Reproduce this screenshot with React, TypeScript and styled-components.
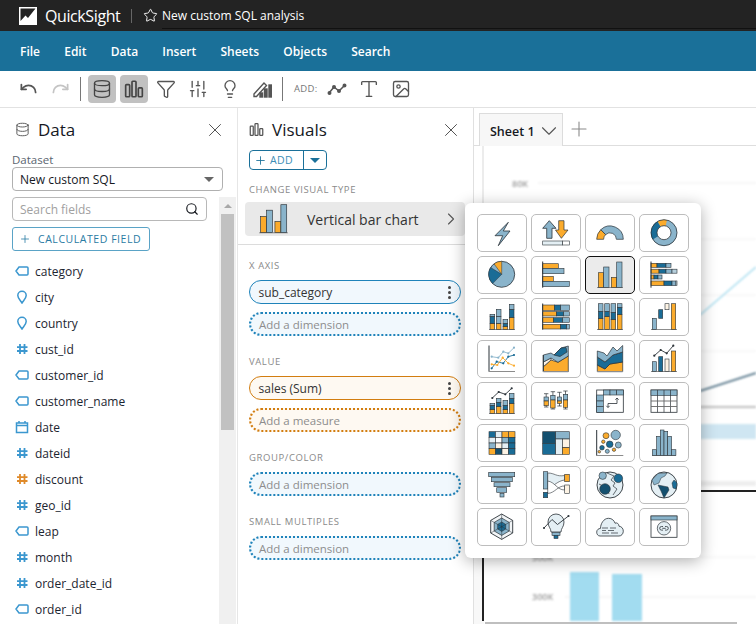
import styled, { createGlobalStyle } from "styled-components";
import { ReactNode } from "react";
import {
  ChevronDown,
  ChevronRight,
  Database,
  Filter,
  Image,
  Lightbulb,
  Plus,
  Redo,
  Search,
  SlidersVertical,
  Star,
  Type,
  Undo,
  X,
} from "lucide-react";

const GlobalStyle = createGlobalStyle`
  html, body { margin: 0; padding: 0; background: #fff; }
  * { box-sizing: border-box; }
`;

const Page = styled.div`
  width: 756px;
  height: 624px;
  overflow: hidden;
  display: flex;
  flex-direction: column;
  font-family: "Open Sans", "Noto Sans", sans-serif;
  color: #16191f;
`;

const TopBar = styled.header`
  height: 31px;
  background: #232323;
  display: flex;
  align-items: center;
  padding-left: 19px;
  color: #fff;
`;

const Brand = styled.span`
  font-size: 16px;
  letter-spacing: -0.4px;
  margin-left: 8px;
  width: 86px;
`;

const TopDivider = styled.span`
  width: 1px;
  height: 14px;
  background: #666;
`;

const Title = styled.span`
  font-size: 12px;
  font-weight: 500;
  margin-left: 4px;
  height: 25px;
  line-height: 24px;
  margin-top: 1px;
  flex: 1;
  border-bottom: 1px solid #111;
`;

const MenuBar = styled.nav`
  height: 40px;
  background: #1a7099;
  display: flex;
  align-items: center;
  gap: 24.2px;
  padding-left: 20px;
`;

const MenuItem = styled.span`
  font-size: 12px;
  font-weight: 600;
  color: #fff;
`;

const Toolbar = styled.div`
  height: 37px;
  border-bottom: 1px solid #e2e2e2;
  display: flex;
  align-items: center;
  padding: 0 0 1px 14px;
  color: #555;
`;

const ToolButton = styled.span<{ $active?: boolean; $muted?: boolean }>`
  width: 28px;
  height: 28px;
  margin-right: 4px;
  border-radius: 4px;
  display: flex;
  align-items: center;
  justify-content: center;
  background: ${(p) => (p.$active ? "#c1c1c1" : "transparent")};
  color: ${(p) => (p.$muted ? "#c4c4c4" : p.$active ? "#444" : "#555")};
`;

const ToolDivider = styled.span`
  width: 1px;
  height: 24px;
  background: #777;
  margin: 0 7px 0 2px;
`;

const AddLabel = styled.span`
  font-size: 9.5px;
  color: #777;
  margin: 0 2px 0 4px;
  letter-spacing: 0.3px;
  width: 27px;
`;

const Workspace = styled.main`
  position: relative;
  flex: 1;
  min-height: 0;
  display: flex;
`;

const DataPanel = styled.section`
  width: 237px;
  display: flex;
  flex-direction: column;
  overflow: hidden;
`;

const VisualsPanel = styled.section`
  width: 237px;
  border-left: 1px solid #e6e6e6;
  border-right: 1px solid #e0e0e0;
  display: flex;
  flex-direction: column;
  padding-left: 11px;
  overflow: hidden;
`;

const PanelHead = styled.div<{ $right: number }>`
  height: 43px;
  flex: none;
  display: flex;
  align-items: center;
  gap: 8px;
  padding: 0 ${(p) => p.$right}px 0 0;
  font-size: 17px;
  color: #16191f;
  svg:first-child {
    color: #555;
  }
`;

const PanelTitle = styled.span`
  flex: 1;
`;

const DataInner = styled.div`
  padding-left: 12px;
  padding-right: 14px;
`;

const DatasetLabel = styled.div`
  font-size: 11.5px;
  color: #5a6570;
  height: 15px;
  margin-top: 1px;
  line-height: 15px;
`;

const SelectBox = styled.div`
  height: 24px;
  border: 1px solid #b0b0b0;
  border-radius: 4px;
  display: flex;
  align-items: center;
  justify-content: space-between;
  padding: 0 8px 0 7px;
  font-size: 12px;
`;

const Caret = styled.span<{ $color: string }>`
  width: 0;
  height: 0;
  border-left: 5px solid transparent;
  border-right: 5px solid transparent;
  border-top: 5px solid ${(p) => p.$color};
`;

const FieldArea = styled.div`
  flex: 1;
  min-height: 0;
  display: flex;
  margin-top: 6px;
`;

const FieldColumn = styled.div`
  width: 219px;
  padding-left: 12px;
  padding-right: 12px;
`;

const SearchBox = styled.div`
  height: 24px;
  border: 1px solid #b8b8b8;
  border-radius: 4px;
  display: flex;
  align-items: center;
  justify-content: space-between;
  padding: 0 7px;
  font-size: 12px;
  color: #a0a0a0;
  svg {
    color: #16191f;
  }
`;

const CalcButton = styled.div`
  width: 138px;
  height: 24px;
  margin-top: 6px;
  margin-bottom: 7px;
  border: 1px solid #5aa3c6;
  border-radius: 3px;
  display: flex;
  align-items: center;
  gap: 7px;
  padding-left: 6px;
  font-size: 10.5px;
  letter-spacing: 0.55px;
  color: #2a7ba3;
  white-space: nowrap;
`;

const FieldRow = styled.div`
  height: 26px;
  display: flex;
  align-items: center;
  gap: 6px;
  padding-left: 3px;
  font-size: 12px;
  color: #1c2530;
  white-space: nowrap;
`;

const ScrollTrack = styled.div`
  width: 17px;
  background: #f0f0f0;
  position: relative;
  display: flex;
  flex-direction: column;
  align-items: center;
  padding-top: 7px;
`;

const ScrollArrow = styled.span`
  width: 0;
  height: 0;
  border-left: 4px solid transparent;
  border-right: 4px solid transparent;
  border-bottom: 4px solid #a8a8a8;
`;

const ScrollThumb = styled.div`
  width: 13px;
  height: 216px;
  margin-top: 6px;
  background: #c1c1c1;
`;

const AddGroup = styled.div`
  width: 78px;
  height: 20px;
  flex: none;
  margin-top: -1px;
  border: 1px solid #1a7099;
  border-radius: 4px;
  display: flex;
  align-items: stretch;
`;

const AddMain = styled.span`
  width: 54px;
  display: flex;
  align-items: center;
  gap: 3px;
  padding-left: 4px;
  font-size: 10.5px;
  letter-spacing: 0.4px;
  color: #3c8db5;
  border-right: 1px solid #1a7099;
  svg {
    color: #1a7099;
  }
`;

const AddCaret = styled.span`
  flex: 1;
  display: flex;
  align-items: center;
  justify-content: center;
`;

const SectionLabel = styled.div<{ $top: number }>`
  font-size: 9.5px;
  letter-spacing: 0.6px;
  color: #8a8a8a;
  height: 14px;
  line-height: 14px;
  margin-top: ${(p) => p.$top}px;
  margin-bottom: 7px;
  white-space: nowrap;
`;

const TypeRow = styled.div`
  width: 220px;
  height: 34px;
  flex: none;
  margin-left: -4px;
  margin-top: -2px;
  background: #e9e9e9;
  border-radius: 4px;
  display: flex;
  align-items: center;
  font-size: 14px;
  color: #333;
  svg:first-child {
    margin-left: 1px;
    margin-right: 6px;
  }
`;

const TypeName = styled.span`
  flex: 1;
`;

const TypeRule = styled.div`
  height: 1px;
  flex: none;
  background: #dcdcdc;
  margin: 8px 0 0 -11px;
`;

const Well = styled.div<{ $kind: "dim" | "measure"; $empty?: boolean }>`
  width: 212px;
  height: 24px;
  flex: none;
  margin-bottom: 8px;
  border-radius: 12px;
  display: flex;
  align-items: center;
  justify-content: space-between;
  padding: 0 9px 0 ${(p) => (p.$empty ? 8 : 8.5)}px;
  font-size: ${(p) => (p.$empty ? 11.5 : 12)}px;
  border: ${(p) => {
    const color = p.$kind === "dim" ? "#1f83ba" : "#d27d10";
    return p.$empty ? `2px dotted ${color}` : `1px solid ${color}`;
  }};
  background: ${(p) => (p.$kind === "dim" ? "#f1f8fd" : "#fef9f2")};
  color: ${(p) => (p.$empty ? "#8d8d8d" : "#333")};
`;

const Dots = styled.span`
  display: flex;
  flex-direction: column;
  gap: 2px;
  i {
    width: 3px;
    height: 3px;
    border-radius: 50%;
    background: #444;
  }
`;

const Canvas = styled.section`
  flex: 1;
  min-width: 0;
  display: flex;
  flex-direction: column;
`;

const TabStrip = styled.div`
  height: 38px;
  flex: none;
  border-bottom: 1px solid #dedede;
  display: flex;
  align-items: flex-end;
  padding-left: 5px;
  color: #8a8a8a;
`;

const Tab = styled.div`
  width: 84px;
  height: 33px;
  margin-bottom: -1px;
  border: 1px solid #dcdcdc;
  border-bottom: 0;
  background: #f7f7f7;
  display: flex;
  align-items: center;
  justify-content: space-between;
  padding: 2px 0 0 10px;
  font-size: 12.5px;
  font-weight: 600;
  color: #16191f;
`;

const NewTab = styled.span`
  margin: 0 0 4px 4px;
  display: flex;
`;

const ChartArt = styled.svg`
  display: block;
  width: 282px;
  flex: 1;
  min-height: 0;
`;

const Popover = styled.div`
  position: absolute;
  left: 465px;
  top: 95px;
  width: 236px;
  height: 355px;
  padding: 11px 12px;
  background: #fff;
  border-radius: 6px;
  box-shadow: 0 3px 16px rgba(0, 0, 0, 0.32);
  display: grid;
  grid-template-columns: repeat(4, 50px);
  grid-auto-rows: 38px;
  gap: 4px;
`;

const Tile = styled.div<{ $selected?: boolean }>`
  border-radius: 5px;
  border: ${(p) => (p.$selected ? "1px solid #111" : "1px solid #bdbdbd")};
  background: ${(p) => (p.$selected ? "#ebebeb" : "#fff")};
  overflow: hidden;
  svg {
    display: block;
    width: 50px;
    height: 38px;
    margin: -1px;
  }
`;

const O = "#fbab2c";
const L = "#8ab4cb";
const D = "#1a6c96";
const N = "#14506f";
const P = "#e4eff4";
const C = "#fdf3e4";
const K = "#2b3238";
const G = "#8c8c8c";

function R({ x, y, w, h, f }: { x: number; y: number; w: number; h: number; f: string }) {
  return <rect x={x} y={y} width={w} height={h} fill={f} stroke={K} strokeWidth={0.6} />;
}

// a column built upward from the base line
function Col({ x, w, base, parts }: { x: number; w: number; base: number; parts: [number, string][] }) {
  let top = base;
  return (
    <>
      {parts.map(([h, f], i) => {
        top -= h;
        return <R key={i} x={x} y={top} w={w} h={h} f={f} />;
      })}
    </>
  );
}

// a row built rightward from the axis
function Row({ x, y, h, parts }: { x: number; y: number; h: number; parts: [number, string][] }) {
  let left = x;
  return (
    <>
      {parts.map(([w, f], i) => {
        const at = left;
        left += w;
        return <R key={i} x={at} y={y} w={w} h={h} f={f} />;
      })}
    </>
  );
}

const Base = ({ x1 = 12, x2 = 38, y = 31.5 }: { x1?: number; x2?: number; y?: number }) => (
  <line x1={x1} x2={x2} y1={y} y2={y} stroke={G} strokeWidth={1} />
);

const VAxis = ({ x = 12, y1 = 5.5, y2 = 31.7 }: { x?: number; y1?: number; y2?: number }) => (
  <line x1={x} x2={x} y1={y1} y2={y2} stroke={K} strokeWidth={1} />
);

function Trend({ pts, color = K }: { pts: string; color?: string }) {
  return (
    <>
      <polyline points={pts} fill="none" stroke={color} strokeWidth={0.9} />
      {pts.split(" ").map((p) => {
        const [cx, cy] = p.split(",");
        return <circle key={p} cx={cx} cy={cy} r={1.1} fill={color} />;
      })}
    </>
  );
}

const barChart = (
  <>
    <Base x1={12} x2={38} />
    <R x={13.3} y={16.7} w={5.4} h={14.6} f={O} />
    <R x={18.7} y={11} w={5.3} h={20.3} f={L} />
    <R x={26.3} y={21.3} w={5.4} h={10} f={O} />
    <R x={31.7} y={6} w={5.3} h={25.3} f={L} />
  </>
);

const tiles: ReactNode[] = [
  <polygon points="31.3,8.3 18,21.7 25.7,21.7 21.3,31.7 33,17 26.3,17" fill={L} stroke={K} strokeWidth={0.8} />,
  <>
    <polygon points="18.3,6.7 11.7,14.3 15.7,14.3 15.7,24.3 21,24.3 21,14.3 25,14.3" fill={L} stroke={K} strokeWidth={0.8} />
    <polygon points="27.7,6.7 33,6.7 33,16 37,16 30.4,24.3 24.5,16 27.7,16" fill={O} stroke={K} strokeWidth={0.7} />
    <R x={11.7} y={27} w={20} h={4} f={P} />
    <R x={31.7} y={27} w={6.6} h={4} f="#fff" />
  </>,
  <>
    <path d="M11.7 25.3A13.3 13.3 0 0 1 15.8 15.7L20.6 20.6A6.4 6.4 0 0 0 18.6 25.3Z" fill={O} stroke={K} strokeWidth={0.7} />
    <path d="M15.8 15.7A13.3 13.3 0 0 1 38.3 25.3H31.4A6.4 6.4 0 0 0 20.6 20.6Z" fill={L} stroke={K} strokeWidth={0.7} />
  </>,
  <>
    <circle cx={25} cy={18.7} r={10} fill="none" stroke={L} strokeWidth={6} />
    <path d="M18.5 7.4A13 13 0 0 1 28 6L26.6 11.9A7 7 0 0 0 21.5 12.6Z" fill={O} />
    <path d="M18.5 7.4L21.5 12.7A7 7 0 0 0 19 22.3L13.8 25.4A13 13 0 0 1 18.5 7.4Z" fill={D} />
    <circle cx={25} cy={18.7} r={13} fill="none" stroke={K} strokeWidth={0.8} />
    <circle cx={25} cy={18.7} r={7} fill="#fff" stroke={K} strokeWidth={0.8} />
  </>,
  <>
    <circle cx={24.7} cy={18.3} r={13} fill={L} stroke={K} strokeWidth={0.8} />
    <path d="M24.7 18.3L13.6 11.5A13 13 0 0 0 15.6 27.6Z" fill={D} stroke={K} strokeWidth={0.5} />
    <path d="M24.7 18.3L24.7 5.3A13 13 0 0 0 17 7.8Z" fill={O} stroke={K} strokeWidth={0.5} />
  </>,
  <>
    <R x={11.7} y={7.7} w={15.6} h={4.7} f={O} />
    <R x={11.7} y={12.4} w={21.3} h={5.3} f={L} />
    <R x={11.7} y={20.3} w={10.6} h={5} f={O} />
    <R x={11.7} y={25.3} w={26.6} h={5.4} f={L} />
    <VAxis x={11.7} />
  </>,
  barChart,
  <>
    <Row x={12} y={7.3} h={4} parts={[[6, O], [9, D], [5, L]]} />
    <Row x={12} y={13.2} h={4} parts={[[8, O], [7, D], [6, L], [5, "#b6cfdc"]]} />
    <Row x={12} y={19} h={4} parts={[[3, O], [4, D], [4, L]]} />
    <Row x={12} y={25} h={4.6} parts={[[13, O], [8, D], [4, L], [1, P]]} />
    <VAxis x={12} />
  </>,
  <>
    <Base />
    <Col x={13} w={4.7} base={31.3} parts={[[6, O], [7, D], [2, L]]} />
    <Col x={19.3} w={4.7} base={31.3} parts={[[6, O], [7, L], [7, L]]} />
    <Col x={26} w={4.7} base={31.3} parts={[[3, O], [3, D], [4, L]]} />
    <Col x={32.3} w={4.7} base={31.3} parts={[[12, O], [8, D], [5, L]]} />
  </>,
  <>
    <Row x={11.7} y={7} h={5.3} parts={[[12, O], [6, D], [8.6, L]]} />
    <Row x={11.7} y={13.7} h={4.3} parts={[[14, O], [7, D], [5.6, L]]} />
    <Row x={11.7} y={19.7} h={4.6} parts={[[11, O], [9, D], [6.6, L]]} />
    <Row x={11.7} y={26.3} h={4.7} parts={[[18, O], [6, D], [2.6, L]]} />
    <VAxis x={11.7} />
  </>,
  <>
    <Base />
    <Col x={13.3} w={4.7} base={31.3} parts={[[11, O], [7, D], [7.6, L]]} />
    <Col x={19.7} w={4.7} base={31.3} parts={[[13, O], [5, D], [7.6, L]]} />
    <Col x={26} w={4.7} base={31.3} parts={[[10, O], [7, D], [8.6, L]]} />
    <Col x={32.3} w={4.7} base={31.3} parts={[[15, O], [7, D], [3.6, L]]} />
  </>,
  <>
    <Base />
    <R x={13.3} y={20.3} w={4} h={11} f={L} />
    <R x={19.7} y={11.7} w={4} h={8.6} f={D} />
    <R x={26} y={5.7} w={4} h={6} f={C} />
    <R x={32.3} y={5.7} w={4.4} h={25.6} f={O} />
  </>,
  <>
    <VAxis />
    <Base />
    <Trend color={L} pts="14.7,16.7 21.3,17.7 26.3,11.7 31.3,13.3 37,7.7" />
    <Trend color={D} pts="14.7,28.3 19.7,21.7 26.3,23.3 31.3,16.7 37,15" />
    <Trend color={O} pts="14.7,24.3 20.3,25 25.7,17.7 31.3,23.3 37,25.7" />
  </>,
  <>
    <path d="M12.3 31.7V26.7L20 20L27 22.3L37.3 16V31.7Z" fill={O} stroke={K} strokeWidth={0.7} />
    <path d="M12.3 26.7V22L20 18V20Z" fill={C} stroke={K} strokeWidth={0.7} />
    <path d="M12.3 22V15L20 13L23 15L30 8L37.3 6V16L27 22.3L20 18Z" fill={L} stroke={K} strokeWidth={0.7} />
    <path d="M23 15L30 8L35 7.5L36 12L29 16.5Z" fill={D} stroke={K} strokeWidth={0.7} />
    <VAxis x={12.3} y1={15} />
    <Base x1={12} x2={38} />
  </>,
  <>
    <path d="M12.3 31.7V25L20 29L25 24L37.7 22V31.7Z" fill={O} stroke={K} strokeWidth={0.7} />
    <path d="M12.3 25V17L20 22L28 15L37.7 12V22L25 24L20 29Z" fill={D} stroke={K} strokeWidth={0.7} />
    <path d="M12.3 17V11L19 13L22 16L28 7L32 11L37.7 5.5V12L28 15L20 22Z" fill={L} stroke={K} strokeWidth={0.7} />
    <Base />
  </>,
  <>
    <Base />
    <R x={13.3} y={21.7} w={4} h={9.6} f={L} />
    <R x={19.7} y={16.7} w={4} h={14.6} f={D} />
    <R x={26} y={19} w={4} h={12.3} f={C} />
    <R x={32.3} y={11} w={4.4} h={20.3} f={O} />
    <Trend pts="15.3,15.7 21.7,10 27.7,13.3 34.3,5.7" />
  </>,
  <>
    <Base />
    <Col x={13} w={4.7} base={31.3} parts={[[4, O], [4, D], [2, L]]} />
    <Col x={19.3} w={4.7} base={31.3} parts={[[7, O], [4, D], [4, L]]} />
    <Col x={26} w={4.7} base={31.3} parts={[[4, O], [4, D], [5, L]]} />
    <Col x={32.3} w={4.7} base={31.3} parts={[[10, O], [5, D], [5, L]]} />
    <Trend pts="15.3,16 21.7,10 28.3,12.3 34.7,6.3" />
  </>,
  <>
    {[
      [13, 11.7, 23, 15, 23.7, 19],
      [19.7, 9.7, 25, 13.3, 26, 18],
      [26.3, 10.3, 22, 15, 21.5, 19],
      [32.3, 9, 25, 12.3, 25.3, 18],
    ].map(([x, top, bottom, boxTop, boxBottom, mid]) => (
      <g key={x}>
        <line x1={x + 2.2} x2={x + 2.2} y1={top} y2={bottom + 2} stroke={K} strokeWidth={0.7} />
        <line x1={x} x2={x + 4.4} y1={top} y2={top} stroke={K} strokeWidth={0.7} />
        <line x1={x} x2={x + 4.4} y1={bottom + 2} y2={bottom + 2} stroke={K} strokeWidth={0.7} />
        <R x={x} y={boxTop} w={4.4} h={mid - boxTop} f={L} />
        <R x={x} y={mid} w={4.4} h={boxBottom - mid} f={O} />
      </g>
    ))}
  </>,
  <>
    <rect x={11.7} y={8} width={26.6} height={22.3} fill="#fff" stroke={K} strokeWidth={0.8} />
    {[18.4, 25, 31.7].map((x) => (
      <R key={x} x={x} y={8} w={6.65} h={5} f={L} />
    ))}
    {[13, 19, 24.5].map((y) => (
      <R key={y} x={11.7} y={y} w={6.7} h={y === 24.5 ? 5.8 : y === 19 ? 5.5 : 6} f={L} />
    ))}
    <path d="M23 25.5V21.5H32V16M30.3 17.7L32 16L33.7 17.7M24.7 23.8L23 25.5L21.3 23.8" fill="none" stroke={K} strokeWidth={0.8} />
  </>,
  <>
    <rect x={12} y={8} width={26} height={22.3} fill="#fff" stroke={K} strokeWidth={0.8} />
    <rect x={12} y={8} width={26} height={5.5} fill={L} stroke={K} strokeWidth={0.6} />
    {[18.5, 25, 31.5].map((x) => (
      <line key={x} x1={x} x2={x} y1={8} y2={30.3} stroke={K} strokeWidth={0.7} />
    ))}
    {[19, 24.5].map((y) => (
      <line key={y} x1={12} x2={38} y1={y} y2={y} stroke="#666" strokeWidth={0.9} />
    ))}
  </>,
  <>
    {[
      [D, P, O, O],
      [P, "#fff", L, D],
      [L, C, P, D],
      [O, N, C, D],
    ].flatMap((row, r) =>
      row.map((f, c) => <R key={`${r}${c}`} x={12 + c * 6.5} y={7.7 + r * 5.65} w={6.5} h={5.65} f={f} />),
    )}
  </>,
  <>
    <R x={11.7} y={7.7} w={13} h={11.7} f={N} />
    <R x={11.7} y={19.4} w={13} h={10.9} f={D} />
    <R x={24.7} y={7.7} w={13.6} h={7.3} f={L} />
    <R x={24.7} y={15} w={6.8} h={15.3} f={P} />
    <R x={31.5} y={15} w={6.8} h={8.7} f={C} />
    <R x={31.5} y={23.7} w={6.8} h={6.6} f={O} />
  </>,
  <>
    <VAxis x={11.7} y1={6} />
    <Base x1={11.7} x2={38.3} />
    {[
      [21, 11.7, 3, O],
      [30.7, 11, 4.7, L],
      [18.3, 17.7, 1.7, O],
      [24.7, 20.3, 3.3, D],
      [33.3, 21, 3, L],
      [17, 23.7, 2.3, D],
      [29, 25.7, 1.7, O],
      [22.3, 27.3, 2, L],
      [14.3, 27.7, 1.3, O],
    ].map(([cx, cy, r, f]) => (
      <circle key={`${cx}`} cx={cx} cy={cy} r={r} fill={f as string} stroke={K} strokeWidth={0.6} />
    ))}
  </>,
  <>
    <Base x1={13} x2={37} />
    <R x={13.3} y={25.7} w={4.3} h={5.7} f={L} />
    <R x={17.6} y={12.3} w={3.7} h={19} f={L} />
    <R x={21.3} y={6} w={3.7} h={25.3} f={L} />
    <R x={25} y={7.3} w={3.7} h={24} f={L} />
    <R x={28.7} y={12.3} w={3.9} h={19} f={L} />
    <R x={32.6} y={25.7} w={4.3} h={5.7} f={L} />
  </>,
  <>
    <R x={11.7} y={6.3} w={26} h={4.4} f={L} />
    <R x={14.3} y={11.3} w={21} h={4.4} f={L} />
    <R x={17} y={16.7} w={16} h={4} f={L} />
    <R x={19.7} y={21.7} w={10} h={4.6} f={L} />
    <R x={23} y={27.3} w={4} h={3.7} f={L} />
  </>,
  <>
    <path d="M16.7 7C24 7 25 11 33.7 9.5V14C26 15 24 20 16.7 21.5Z" fill={P} stroke={K} strokeWidth={0.6} />
    <path d="M16.7 15C24 16 26 24 33.7 24V20C27 19.5 24 27 16.7 27.5Z" fill="#fff" stroke={K} strokeWidth={0.6} />
    <R x={12.3} y={5.7} w={4.4} h={17.3} f={L} />
    <R x={12.3} y={26.3} w={4.4} h={5.4} f={D} />
    <R x={33.7} y={8.3} w={4.6} h={7.4} f={O} />
    <R x={33.7} y={19} w={4.6} h={8.3} f={C} />
  </>,
  <>
    <circle cx={25} cy={19} r={13} fill={P} stroke={K} strokeWidth={0.9} />
    <path d="M22 7L29 10L26 14L30 17L28 20L32 23L28 29M14 18L22 22L24 28" fill="none" stroke={K} strokeWidth={0.7} />
    <circle cx={17.7} cy={9.7} r={3.7} fill={L} stroke={K} strokeWidth={0.6} />
    <circle cx={33.3} cy={12.3} r={4.3} fill={D} stroke={K} strokeWidth={0.6} />
    <circle cx={20} cy={23} r={5.3} fill={N} stroke={K} strokeWidth={0.6} />
  </>,
  <>
    <circle cx={25} cy={19} r={13} fill={P} stroke={K} strokeWidth={0.9} />
    <path d="M13 14L19 7.5L28 7L26 10L22 12L20 17L15 19Z" fill={L} stroke={K} strokeWidth={0.5} />
    <path d="M19 19L29 21L30 24L25 32L22 25Z" fill={N} stroke={K} strokeWidth={0.5} />
    <path d="M35 14L38 17L37 23L34 22L33 17Z" fill={D} stroke={K} strokeWidth={0.5} />
  </>,
  <>
    <polygon points="24.7,6 35.7,12.4 35.7,25 24.7,31.4 13.7,25 13.7,12.4" fill="#f2f5f7" stroke={K} strokeWidth={0.9} />
    <polygon points="24.7,10 32.2,14.4 32.2,23 24.7,27.4 17.2,23 17.2,14.4" fill={L} stroke={K} strokeWidth={0.7} />
    <polygon points="24.7,14 28.7,16.4 28.7,21 24.7,23.4 20.7,21 20.7,16.4" fill={D} stroke={K} strokeWidth={0.6} />
    <path d="M24.7 6V31.4M13.7 12.4L35.7 25M35.7 12.4L13.7 25" stroke={K} strokeWidth={0.5} />
  </>,
  <>
    <path d="M20 24C20 20 17 19 17 14A8 8 0 0 1 33 14C33 19 30 20 30 24Z" fill={P} stroke={K} strokeWidth={0.8} />
    <R x={21} y={24.5} w={8} h={3} f={L} />
    <R x={23} y={27.5} w={4} h={3} f={D} />
    <polyline points="13,20 21,11.5 26.5,16.5 37.5,8" fill="none" stroke={K} strokeWidth={0.9} />
    <circle cx={13} cy={20} r={1.1} fill={K} />
    <circle cx={37.5} cy={8} r={1.1} fill={K} />
  </>,
  <>
    <path d="M15 28C12.8 28 11.7 26 11.7 24.2C11.7 21.8 13.5 20.5 15.5 20.4C15.5 16 18.5 10.3 23.5 10.3C27 10.3 29.2 12.5 30 15.2C31.8 14.3 33.8 15.5 34 18.2C36.5 18.5 38.3 20.3 38.3 23.2C38.3 26 36.3 28 34 28Z" fill={P} stroke={K} strokeWidth={0.8} />
    <path d="M17 20H23M25 20H31M17 22.5H21M23 22.5H29M17 25H24M26 25H33" stroke={K} strokeWidth={0.7} />
  </>,
  <>
    <rect x={12} y={8} width={26} height={21.3} fill="#fff" stroke={K} strokeWidth={0.8} />
    <rect x={12} y={8} width={26} height={4} fill={L} stroke={K} strokeWidth={0.6} />
    <circle cx={25} cy={20.3} r={6.7} fill={P} stroke={K} strokeWidth={0.7} />
    <path d="M24 18.5H22.5A1.8 1.8 0 0 0 22.5 22.1H24M26 18.5H27.5A1.8 1.8 0 0 1 27.5 22.1H26M23.3 20.3H26.7" fill="none" stroke={K} strokeWidth={0.8} />
  </>,
];

const FieldIcon = ({ kind }: { kind: string }) => {
  const blue = "#3b97cf";
  if (kind === "num" || kind === "measure") {
    return (
      <svg width="14" height="14" viewBox="0 0 14 14" fill="none" stroke={kind === "num" ? blue : "#df8a2a"} strokeWidth="1.8">
        <path d="M5 2V12M9.5 2V12M2 5.2H12.5M2 9H12.5" />
      </svg>
    );
  }
  return (
    <svg width="14" height="14" viewBox="0 0 14 14" fill="none" stroke={blue} strokeWidth="1.5">
      {kind === "tag" && <path d="M4 3H12C12.6 3 13 3.4 13 4V10C13 10.6 12.6 11 12 11H4L1 7Z" />}
      {kind === "geo" && <path d="M7 13C5 10 2.8 8 2.8 5.5A4.2 4.2 0 0 1 11.2 5.5C11.2 8 9 10 7 13Z" />}
      {kind === "date" && <path d="M1.5 3H12.5V12.5H1.5ZM1.5 5.5H12.5M4 1V3M10 1V3" />}
    </svg>
  );
};

const fields: [string, string][] = [
  ["category", "tag"],
  ["city", "geo"],
  ["country", "geo"],
  ["cust_id", "num"],
  ["customer_id", "tag"],
  ["customer_name", "tag"],
  ["date", "date"],
  ["dateid", "num"],
  ["discount", "measure"],
  ["geo_id", "num"],
  ["leap", "tag"],
  ["month", "num"],
  ["order_date_id", "num"],
  ["order_id", "tag"],
];

const BarsIcon = ({ size = 18 }: { size?: number }) => (
  <svg width={size} height={size} viewBox="0 0 18 18" fill="none" stroke="currentColor" strokeWidth="1.5">
    <rect x="1.5" y="5" width="3.6" height="11" rx="0.8" />
    <rect x="7.2" y="2" width="3.6" height="14" rx="0.8" />
    <rect x="12.9" y="8" width="3.6" height="8" rx="0.8" />
  </svg>
);

const menus = ["File", "Edit", "Data", "Insert", "Sheets", "Objects", "Search"];

export default function App() {
  return (
    <Page>
      <GlobalStyle />
      <TopBar>
        <svg width="18" height="18" viewBox="0 0 18 18">
          <rect width="18" height="18" fill="#fff" />
          <path d="M1.5 1.5H16.5L9 11L6.5 8.5L1.5 14Z" fill="#232323" />
        </svg>
        <Brand>QuickSight</Brand>
        <TopDivider />
        <Star size={15} strokeWidth={1.5} style={{ marginLeft: 11 }} />
        <Title>New custom SQL analysis</Title>
      </TopBar>
      <MenuBar>
        {menus.map((m) => (
          <MenuItem key={m}>{m}</MenuItem>
        ))}
      </MenuBar>
      <Toolbar>
        <ToolButton><Undo size={19} strokeWidth={2.2} /></ToolButton>
        <ToolButton $muted><Redo size={19} strokeWidth={2.2} /></ToolButton>
        <ToolDivider />
        <ToolButton $active><Database size={20} strokeWidth={1.6} /></ToolButton>
        <ToolButton $active><BarsIcon size={20} /></ToolButton>
        <ToolButton><Filter size={20} strokeWidth={1.6} /></ToolButton>
        <ToolButton><SlidersVertical size={20} strokeWidth={1.6} /></ToolButton>
        <ToolButton><Lightbulb size={20} strokeWidth={1.6} /></ToolButton>
        <ToolButton>
          <svg width="20" height="20" viewBox="0 0 20 20" fill="none" stroke="currentColor" strokeWidth="1.4">
            <path d="M2 15L12 4L14.5 6.5L4.5 17.5H2Z" />
            <rect x="8" y="14" width="2.5" height="4" fill="currentColor" />
            <rect x="12.5" y="10" width="2.5" height="8" fill="currentColor" />
            <rect x="17" y="6" width="2.5" height="12" fill="currentColor" />
          </svg>
        </ToolButton>
        <ToolDivider />
        <AddLabel>ADD:</AddLabel>
        <ToolButton>
          <svg width="20" height="20" viewBox="0 0 20 20" fill="none" stroke="currentColor" strokeWidth="1.6">
            <polyline points="2,14 7,8 12,12 18,6" />
            <circle cx="2.5" cy="14" r="1.2" fill="currentColor" />
            <circle cx="7" cy="8" r="1.2" fill="currentColor" />
            <circle cx="12" cy="12" r="1.2" fill="currentColor" />
            <circle cx="17.5" cy="6.5" r="1.2" fill="currentColor" />
          </svg>
        </ToolButton>
        <ToolButton><Type size={22} strokeWidth={1.5} /></ToolButton>
        <ToolButton><Image size={20} strokeWidth={1.6} /></ToolButton>
      </Toolbar>
      <Workspace>
        <DataPanel>
          <DataInner>
            <PanelHead $right={0}>
              <Database size={15} strokeWidth={1.5} style={{ marginLeft: 3 }} />
              <PanelTitle>Data</PanelTitle>
              <X size={22} strokeWidth={1} color="#444" style={{ marginRight: -3 }} />
            </PanelHead>
            <DatasetLabel>Dataset</DatasetLabel>
            <SelectBox>
              New custom SQL
              <Caret $color="#666" />
            </SelectBox>
          </DataInner>
          <FieldArea>
            <FieldColumn>
              <SearchBox>
                Search fields
                <Search size={14} strokeWidth={2} />
              </SearchBox>
              <CalcButton>
                <Plus size={12} strokeWidth={1.6} />
                CALCULATED FIELD
              </CalcButton>
              {fields.map(([name, kind]) => (
                <FieldRow key={name}>
                  <FieldIcon kind={kind} />
                  {name}
                </FieldRow>
              ))}
            </FieldColumn>
            <ScrollTrack>
              <ScrollArrow />
              <ScrollThumb />
            </ScrollTrack>
          </FieldArea>
        </DataPanel>
        <VisualsPanel>
          <PanelHead $right={11}>
            <BarsIcon size={15} />
            <PanelTitle>Visuals</PanelTitle>
            <X size={22} strokeWidth={1} color="#444" />
          </PanelHead>
          <AddGroup>
            <AddMain>
              <Plus size={13} strokeWidth={1.6} />
              ADD
            </AddMain>
            <AddCaret><Caret $color="#1a7099" /></AddCaret>
          </AddGroup>
          <SectionLabel $top={13}>CHANGE VISUAL TYPE</SectionLabel>
          <TypeRow>
            <svg width="55" height="42" viewBox="0 0 50 38">{barChart}</svg>
            <TypeName>Vertical bar chart</TypeName>
            <ChevronRight size={20} strokeWidth={1.3} color="#555" style={{ marginRight: 4 }} />
          </TypeRow>
          <TypeRule />
          <SectionLabel $top={14}>X AXIS</SectionLabel>
          <Well $kind="dim">
            sub_category
            <Dots><i /><i /><i /></Dots>
          </Well>
          <Well $kind="dim" $empty>Add a dimension</Well>
          <SectionLabel $top={11}>VALUE</SectionLabel>
          <Well $kind="measure">
            sales (Sum)
            <Dots><i /><i /><i /></Dots>
          </Well>
          <Well $kind="measure" $empty>Add a measure</Well>
          <SectionLabel $top={11}>GROUP/COLOR</SectionLabel>
          <Well $kind="dim" $empty>Add a dimension</Well>
          <SectionLabel $top={11}>SMALL MULTIPLES</SectionLabel>
          <Well $kind="dim" $empty>Add a dimension</Well>
        </VisualsPanel>
        <Canvas>
          <TabStrip>
            <Tab>
              Sheet 1
              <ChevronDown size={26} strokeWidth={1} color="#555" />
            </Tab>
            <NewTab><Plus size={24} strokeWidth={1.1} /></NewTab>
          </TabStrip>
          <ChartArt viewBox="474 146 282 478" preserveAspectRatio="xMinYMin slice">
            <defs>
              <filter id="soft"><feGaussianBlur stdDeviation="0.8" /></filter>
            </defs>
            <rect x="474" y="490" width="10" height="134" fill="#f8f8f8" />
            <rect x="482" y="146" width="2" height="344" fill="#ececec" />
            <g filter="url(#soft)">
              <line x1="538" x2="756" y1="183" y2="183" stroke="#eee" />
              <text x="512" y="187" fontFamily="Open Sans" fontSize="9" fontWeight="600" fill="#999">80K</text>
              <line x1="701" x2="756" y1="239" y2="239" stroke="#f0f0f0" />
              <line x1="701" x2="756" y1="295" y2="295" stroke="#f0f0f0" />
              <line x1="701" x2="756" y1="351" y2="351" stroke="#f0f0f0" />
              <line x1="700" x2="756" y1="315" y2="267" stroke="#a5dcef" strokeWidth="1.6" />
              <line x1="700" x2="756" y1="391" y2="373" stroke="#3f6479" strokeWidth="1.6" />
              <line x1="700" x2="756" y1="407" y2="407" stroke="#a8a8a8" strokeWidth="1.6" />
              <rect x="700" y="424" width="56" height="15" fill="#cfe6f2" />
              <rect x="700" y="481" width="56" height="5" fill="#eee" />
              <line x1="700" x2="756" y1="557" y2="557" stroke="#f0f0f0" />
              <line x1="565" x2="756" y1="597" y2="597" stroke="#eee" />
              <text x="532" y="600" fontFamily="Open Sans" fontSize="9" fontWeight="600" fill="#999">300K</text>
              <text x="532" y="561" fontFamily="Open Sans" fontSize="9" fontWeight="600" fill="#999">500K</text>
              <rect x="570" y="572" width="29" height="49" fill="#a2dcf0" />
              <rect x="612" y="574" width="30" height="47" fill="#a2dcf0" />
            </g>
            <line x1="483" x2="756" y1="491" y2="491" stroke="#222" strokeWidth="2" />
            <line x1="483" x2="483" y1="490" y2="621" stroke="#222" strokeWidth="2" />
            <line x1="485" x2="737" y1="623" y2="623" stroke="#aaa" strokeWidth="1.5" />
          </ChartArt>
        </Canvas>
        <Popover>
          {tiles.map((art, i) => (
            <Tile key={i} $selected={i === 6}>
              <svg viewBox="0 0 50 38">{art}</svg>
            </Tile>
          ))}
        </Popover>
      </Workspace>
    </Page>
  );
}
